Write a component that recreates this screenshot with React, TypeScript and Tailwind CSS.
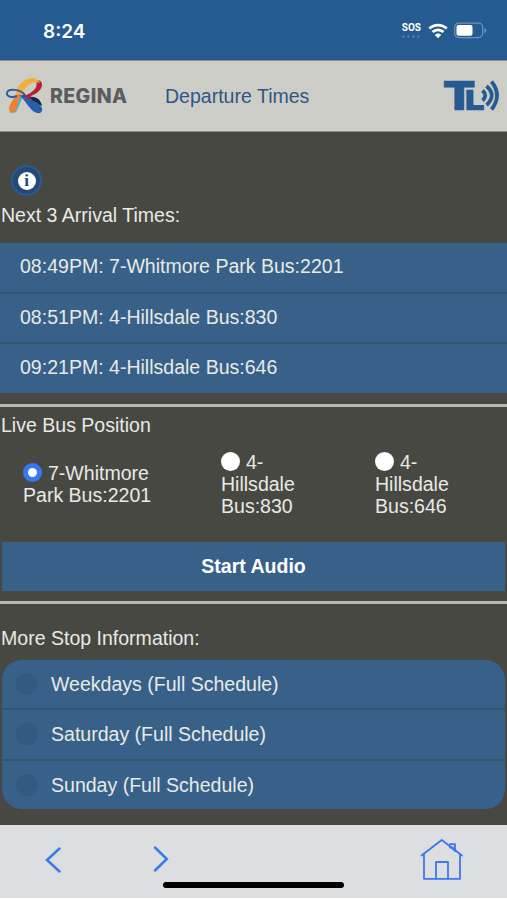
import React, { useState } from 'react';

const ARRIVALS = [
  '08:49PM: 7-Whitmore Park Bus:2201',
  '08:51PM: 4-Hillsdale Bus:830',
  '09:21PM: 4-Hillsdale Bus:646'
];

const BUSES = [
  { id: '2201', label: '7-Whitmore Park Bus:2201', className: 'ml-[23px] mt-[11px] w-[140px]' },
  { id: '830', label: '4- Hillsdale Bus:830', className: 'ml-[58px] w-[90px]' },
  { id: '646', label: '4- Hillsdale Bus:646', className: 'ml-[64px] w-[90px]' }
];

const SCHEDULES = [
  'Weekdays (Full Schedule)',
  'Saturday (Full Schedule)',
  'Sunday (Full Schedule)'
];

function StatusBar() {
  return (
    <div className="flex h-[60px] items-center justify-between bg-[#255b91] pl-[43px] pr-[20px] text-white">
      <span className="mt-[3px] font-[Inter] text-[19px] font-semibold leading-6">8:24</span>
      <div className="mt-[1px] flex items-center">
        <div className="-mt-[1px] flex flex-col items-center">
          <span className="font-['Roboto'] text-[10px] font-bold leading-[11px]">SOS</span>
          <div className="mt-[2px] flex gap-[2px]">
            {[0, 1, 2, 3].map(dot => (
              <span key={dot} className="h-[3px] w-[3px] rounded-full bg-[#4677aa]" />
            ))}
          </div>
        </div>
        <svg className="ml-[7px] h-[16px] w-[20px]" viewBox="0 0 20 16" fill="none" stroke="white" strokeWidth="2.8">
          <path d="M1.3 5.6a12.4 12.4 0 0 1 17.4 0" />
          <path d="M4.6 9a7.7 7.7 0 0 1 10.8 0" />
          <path d="M10 15.2 6.8 11.9a4.6 4.6 0 0 1 6.4 0z" fill="white" stroke="none" />
        </svg>
        <svg className="ml-[6px] h-[17px] w-[33px]" viewBox="0 0 33 17">
          <rect x="0.7" y="1.2" width="28" height="14.4" rx="4" fill="none" stroke="#6a95be" strokeWidth="1.2" />
          <rect x="2.5" y="3" width="16" height="10.8" rx="2" fill="white" />
          <path d="M30.3 6v5c1.3-.5 2-1.4 2-2.5s-.7-2-2-2.5z" fill="#6a95be" />
        </svg>
      </div>
    </div>
  );
}

// Ribbon mark, each loop is its own tapered shape
function ReginaMark() {
  return (
    <svg className="h-[38px] w-[40px]" viewBox="0 0 40 38">
      <path d="M11 35C14 30 15 25 19 18L15 18C12 24 10 30 9 36z" fill="#45b4dc" />
      <path d="M30 3C38 2 39 9 34 14C30 18 24 20 16 21C23 17 29 15 31 10C32 7 32 5 30 3z" fill="#b62034" />
      <path d="M17 18C22 17 28 20 31 24L26 25C24 22 21 20 16 20z" fill="#a32645" />
      <path d="M11 18C11 9 19 1 27 1C31 1 34 3 35 6C27 3 20 10 16 18z" fill="#f4ad3a" />
      <path d="M10 18L16 17C13 23 13 30 11 33C9 37 4 37 4 32C4 27 9 23 10 18z" fill="#ed8235" />
      <path d="M20 18C15 12 3 11 2 16C1 20 8 21 12 19" fill="none" stroke="#285fa9" strokeWidth="2" />
      <path d="M25 20C31 19 36 23 37 29L30 26z" fill="#17264a" />
      <path d="M14 18C20 19 25 23 31 25C35 27 38 31 37 34C35 38 29 36 26 32C22 28 19 22 14 18z" fill="#285fa9" />
    </svg>
  );
}

function TransitLogo() {
  return (
    <svg
      className="h-[34px] w-[56px] overflow-visible font-['Liberation_Sans']"
      viewBox="0 0 56 34"
      fill="#255b91"
      stroke="#255b91"
      fontWeight="bold"
    >
      <text x="0" y="0" fontSize="39" strokeWidth="2.4" transform="translate(0.7 30) scale(1.21 1)">T</text>
      <text x="0" y="0" fontSize="25" strokeWidth="2.4" transform="translate(21.8 30) scale(1.16 1)">L</text>
      <g fill="none" strokeWidth="3.8">
        <path d="M38.5 11.5q5.5 5 0 10" />
        <path d="M42.5 7q10.5 9.5 0 19" />
        <path d="M47.5 2.5q11 14 0 28" />
      </g>
    </svg>
  );
}

function Header() {
  return (
    <header className="flex h-[72px] items-center border-y border-[#8e8e88] bg-[#cdcdc7] pl-[5px] pr-[7px]">
      <ReginaMark />
      <span className="ml-[5px] w-[77px] font-[Inter] text-[19.5px] font-extrabold tracking-[0.4px] text-[#5b5c5e]">
        REGINA
      </span>
      <h1 className="-mt-[1px] ml-[38px] text-[#2d5787]">Departure Times</h1>
      <div className="ml-auto">
        <TransitLogo />
      </div>
    </header>
  );
}

function BottomBar() {
  return (
    <footer className="h-[75px] border-b-2 border-white bg-[#dddee0]">
      <div className="flex h-[57px] pt-[12px] text-[#3b78ef]">
        <svg className="ml-[45px] mt-[10px] h-[26px] w-[16px]" viewBox="0 0 16 26" fill="none" stroke="currentColor" strokeWidth="2.5" strokeLinecap="round">
          <path d="M14.5 1.5 2 13 14.5 24.5" />
        </svg>
        <svg className="ml-[92px] mt-[9px] h-[26px] w-[16px]" viewBox="0 0 16 26" fill="none" stroke="currentColor" strokeWidth="2.5" strokeLinecap="round">
          <path d="M2 1.5 13.8 13 2 24.5" />
        </svg>
        <svg className="ml-[251px] mt-[1px] h-[44px] w-[44px]" viewBox="0 0 44 44" fill="none" stroke="currentColor" strokeWidth="1.8" strokeLinecap="round" strokeLinejoin="round">
          <path d="M1.5 17.5 21.7 2 42 17.5M4 16v24.8h36V16" />
          <path d="M16 40.8V24h12v16.8M30 8.5V6.2h5v7" />
          <path d="M30 9.5h3v2" />
        </svg>
      </div>
      <div className="mx-auto h-[6px] w-[181px] rounded-full bg-black" />
    </footer>
  );
}

export default function App() {
  const [selected, setSelected] = useState('2201');

  return (
    <div className="flex h-[900px] w-[507px] flex-col overflow-hidden bg-[#484842] font-['Liberation_Sans',sans-serif] text-[19.55px] leading-[22px] text-[#e9e9e6]">
      <StatusBar />
      <Header />

      <main className="flex-1">
        {/* Arrivals */}
        <button className="ml-[11px] mt-[33px] flex h-[31px] w-[31px] items-center justify-center rounded-full border-2 border-[#285c91] bg-[#234a77]">
          <span className="flex h-[18px] w-[18px] items-center justify-center rounded-full bg-white font-['Liberation_Serif'] text-[17px] font-bold leading-none text-[#234a77]">
            i
          </span>
        </button>
        <h2 className="ml-px mt-[8px]">Next 3 Arrival Times:</h2>
        <ul className="mt-[17px] space-y-[2px] bg-[#33536f]">
          {ARRIVALS.map(arrival => (
            <li key={arrival} className="h-[48.6px] bg-[#386189] pl-[20px] pt-[12px]">{arrival}</li>
          ))}
        </ul>

        {/* Live position */}
        <section className="mt-[11px] border-t-[3px] border-[#b7b6b1] pt-[7px]">
          <h2 className="ml-px">Live Bus Position</h2>
          <div className="mt-[15px] flex h-[91px] items-start">
            {BUSES.map(bus => (
              <label key={bus.id} className={bus.className}>
                <input
                  type="radio"
                  name="bus"
                  checked={selected === bus.id}
                  onChange={() => setSelected(bus.id)}
                  className="mr-[6px] inline-block h-[19px] w-[19px] appearance-none rounded-full bg-white align-[-2px] checked:border-[5.5px] checked:border-[#3478f6]"
                />
                {bus.label}
              </label>
            ))}
          </div>
          <button className="ml-[2px] block h-[49px] w-[503px] bg-[#386189] text-center font-bold text-white">
            Start Audio
          </button>
        </section>

        {/* Schedules */}
        <section className="mt-[10px] border-t-[3px] border-[#b7b6b1] pt-[23px]">
          <h2 className="ml-px">More Stop Information:</h2>
          <ul className="ml-[2px] mt-[11px] w-[503px] space-y-[2px] overflow-hidden rounded-[20px] bg-[#33536f]">
            {SCHEDULES.map(schedule => (
              <li key={schedule} className="flex h-[48.4px] items-center bg-[#386189] pl-[14px]">
                <span className="mr-[13px] h-[22px] w-[22px] rounded-full bg-[#335a80]" />
                {schedule}
              </li>
            ))}
          </ul>
        </section>
      </main>

      <BottomBar />
    </div>
  );
}
